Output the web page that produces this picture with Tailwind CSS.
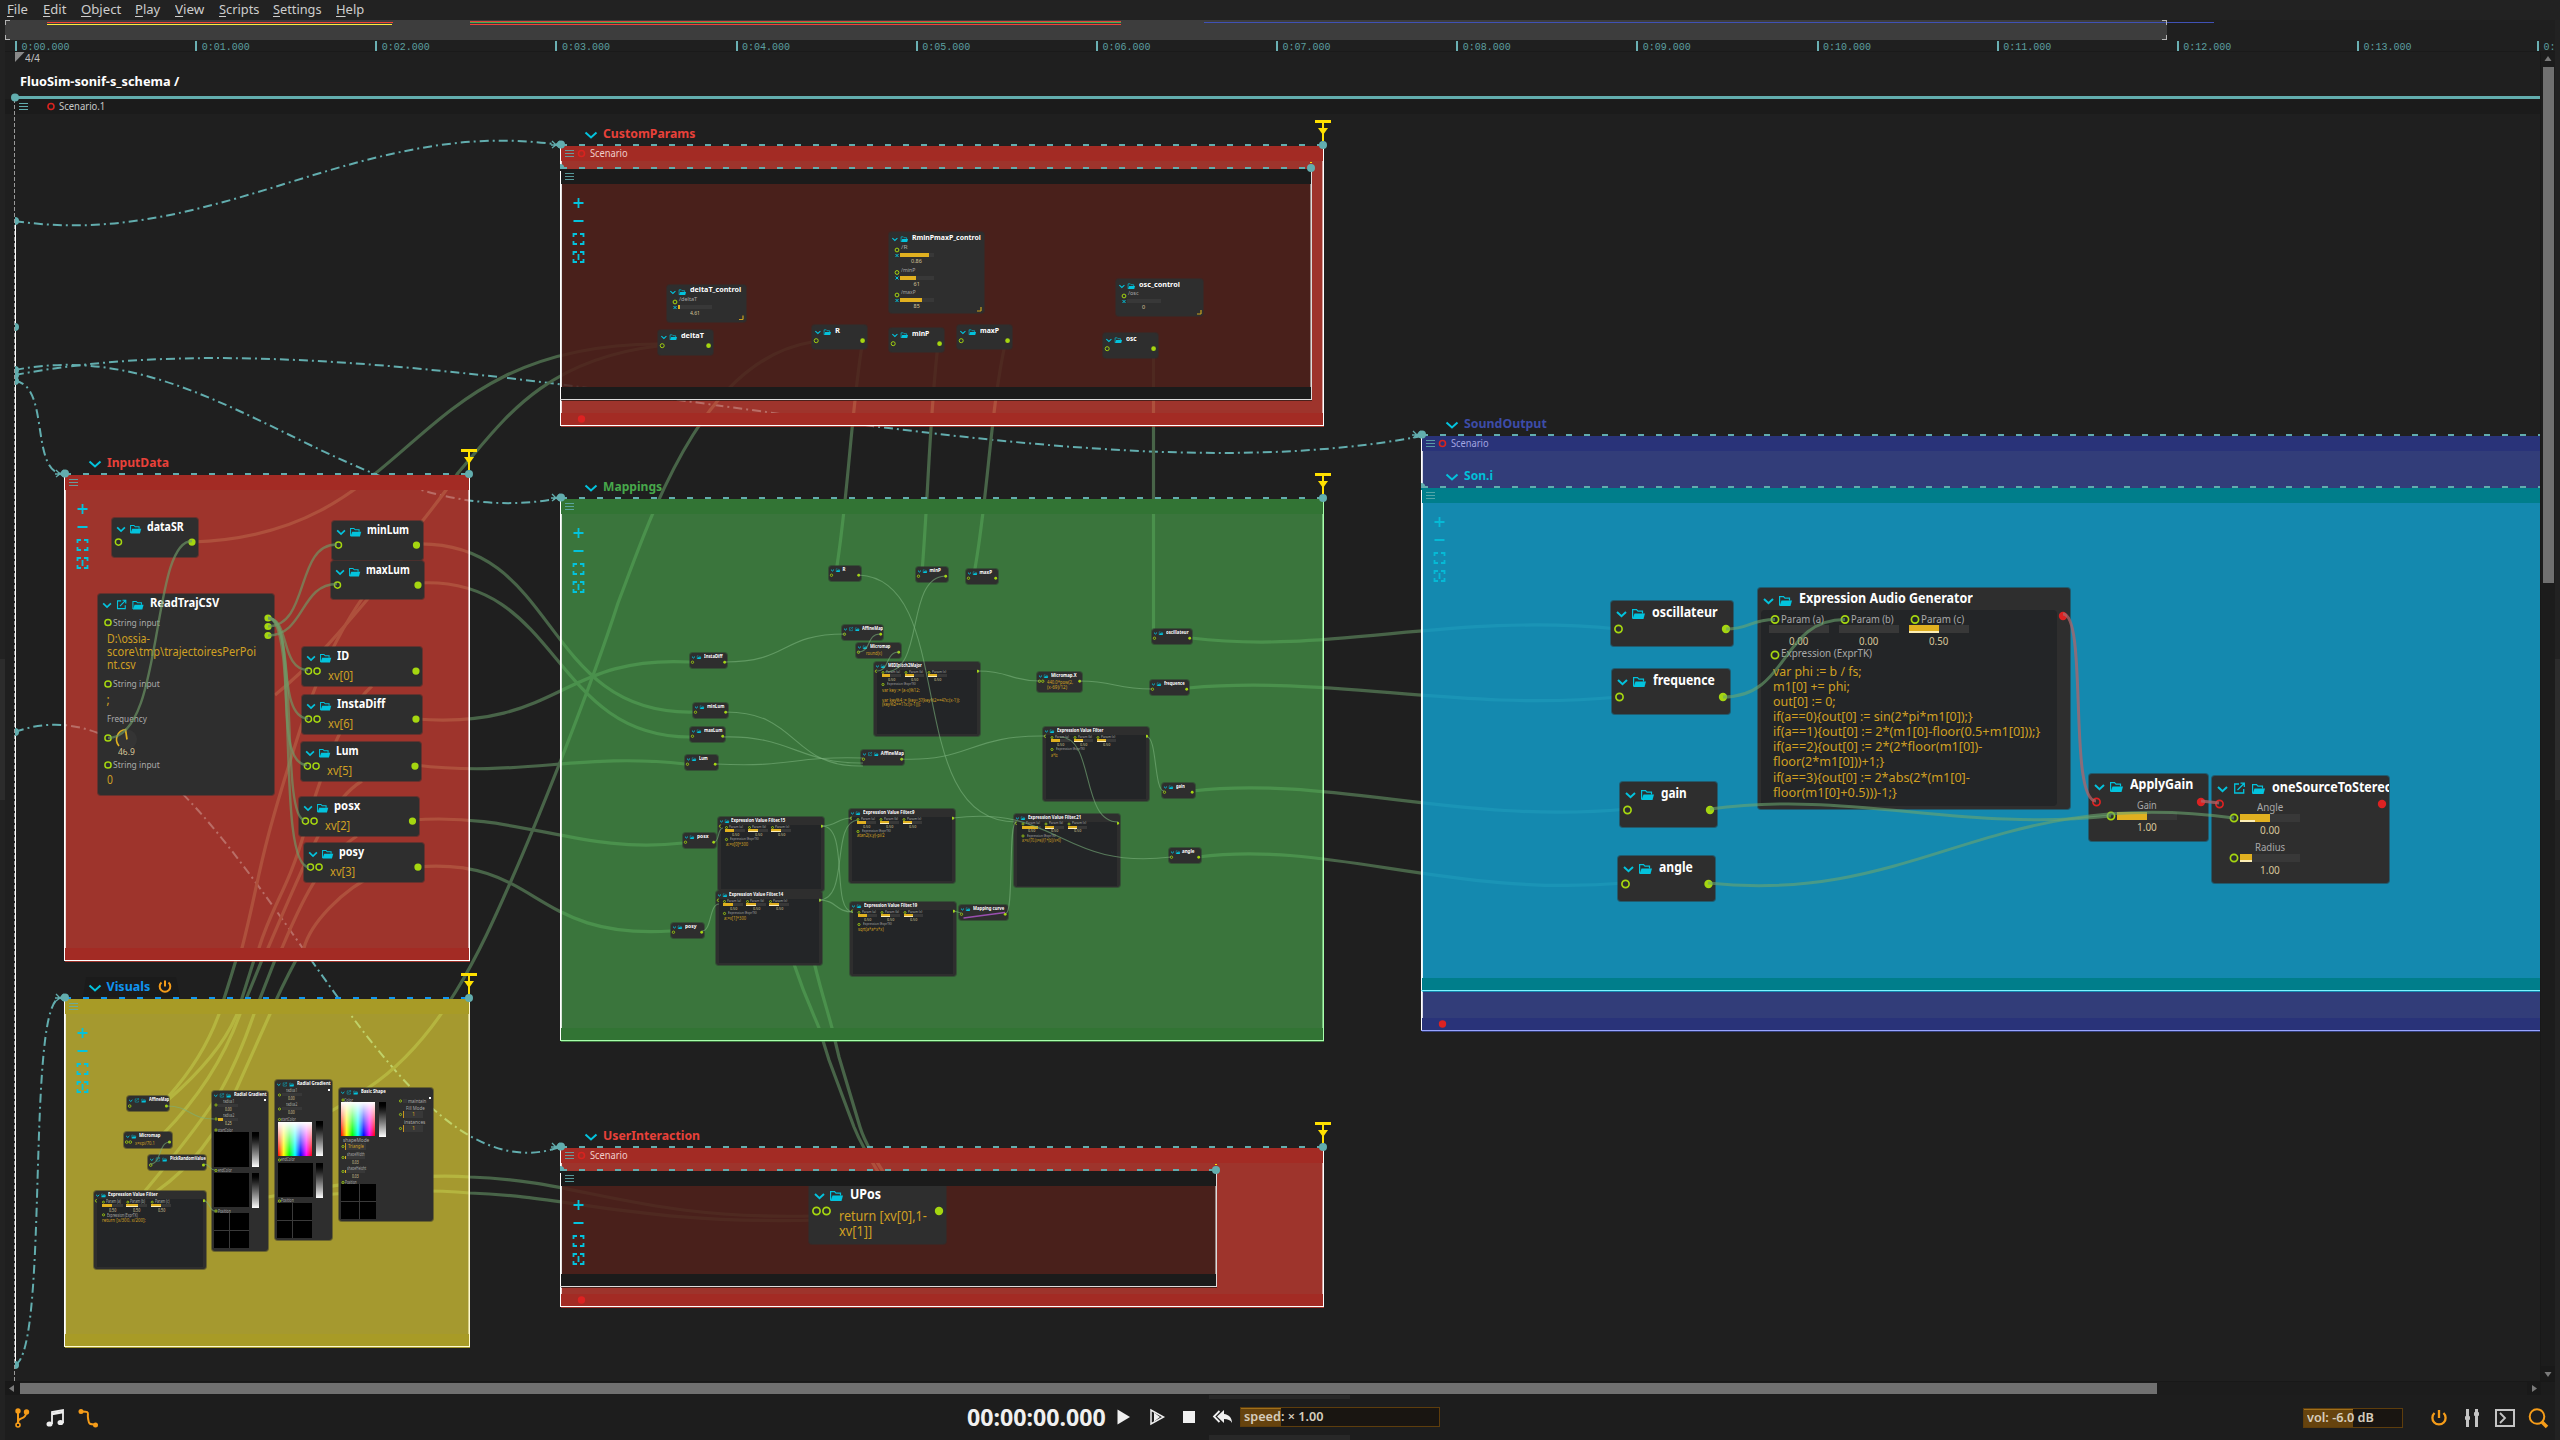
<!DOCTYPE html>
<html lang="en">
<head>
<meta charset="utf-8">
<title>FluoSim-sonif-s_schema</title>
<script src="https://cdn.jsdelivr.net/npm/@tailwindcss/browser@4"></script>
</head>
<body class="flex h-screen w-screen flex-col overflow-hidden bg-[#222222] font-['Noto_Sans',sans-serif] text-[#cfcfcf]">

<nav class="flex h-5 shrink-0 items-center pl-[7px] text-[12.5px] leading-5 text-[#cdcdcd]">
  <div class="w-9"><span data-w="21" class="inline-block origin-left"><u class="underline-offset-2">F</u>ile</span></div>
  <div class="w-[38px]"><span data-w="23" class="inline-block origin-left"><u class="underline-offset-2">E</u>dit</span></div>
  <div class="w-[54px]"><span data-w="40" class="inline-block origin-left"><u class="underline-offset-2">O</u>bject</span></div>
  <div class="w-10"><span data-w="25" class="inline-block origin-left"><u class="underline-offset-2">P</u>lay</span></div>
  <div class="w-[44px]"><span data-w="29" class="inline-block origin-left"><u class="underline-offset-2">V</u>iew</span></div>
  <div class="w-[54px]"><span data-w="40" class="inline-block origin-left"><u class="underline-offset-2">S</u>cripts</span></div>
  <div class="w-[63px]"><span data-w="49" class="inline-block origin-left"><u class="underline-offset-2">S</u>ettings</span></div>
  <div class="w-10"><span data-w="28" class="inline-block origin-left"><u class="underline-offset-2">H</u>elp</span></div>
</nav>

<div class="flex min-h-0 flex-1">
  <div class="flex w-[5px] shrink-0 flex-col pt-[639px]"><div class="h-[141px] w-[5px] bg-[#2c2c2c]"></div></div>

  <div class="flex min-w-0 flex-1 flex-col bg-[#1f1f1f]">
    <!-- minimap -->
    <svg class="h-5 w-full shrink-0" viewBox="5 20 2550 20" shape-rendering="crispEdges">
      <rect x="5" y="20" width="2162" height="20" fill="#3d3d3d"/>
      <rect x="47" y="22" width="346" height="1" fill="#f44336"/><rect x="47" y="24" width="345" height="1" fill="#ffeb3b"/>
      <rect x="470" y="21" width="651" height="1" fill="#e0453a"/><rect x="470" y="22" width="651" height="1" fill="#4caf50"/><rect x="470" y="24" width="651" height="1" fill="#f44336"/>
      <rect x="1204" y="22" width="1010" height="1" fill="#3f51b5"/>
      <path d="M10 20.5H5.5V25M5.5 35V39.5H10M2162 20.5H2166.5V25M2166.5 35V39.5H2162" fill="none" stroke="#b5b5b5"/>
    </svg>
    <!-- time ruler -->
    <div id="ruler" class="relative h-3 shrink-0 overflow-hidden border-b border-[#1a1a1a]"></div>

    <div class="flex min-h-0 flex-1">
      <main class="relative min-w-0 flex-1 overflow-hidden border-r border-[#181818]">
        <div id="stage" class="absolute -top-[52px] -left-[5px] h-[1440px] w-[2560px]"></div>
      </main>
      <div class="flex w-[14px] shrink-0 flex-col items-center bg-[#1c1c1c]">
        <svg class="h-[15px] w-[14px] shrink-0" viewBox="0 0 14 15"><path d="M3.5 9h7L7 4z" fill="#7a7a7a"/></svg>
        <div class="h-[516px] w-[11px] bg-[#707070]"></div>
        <div class="flex-1"></div>
        <svg class="h-[15px] w-[14px] shrink-0 bg-[#191919]" viewBox="0 0 14 15"><path d="M3.5 6h7L7 11z" fill="#7a7a7a"/></svg>
      </div>
    </div>
    <div class="flex h-[14px] shrink-0 items-center border-t border-[#181818] bg-[#1c1c1c]">
      <svg class="h-[13px] w-[15px] shrink-0 bg-[#191919]" viewBox="0 0 15 13"><path d="M9 3v7L4 6.500z" fill="#7a7a7a"/></svg>
      <div class="h-[11px] w-[2137px] bg-[#707070]"></div>
      <div class="flex-1"></div>
      <svg class="mr-[14px] h-[13px] w-[14px] shrink-0 bg-[#191919]" viewBox="0 0 14 13"><path d="M5 3v7l5-3.500z" fill="#7a7a7a"/></svg>
    </div>

    <!-- transport -->
    <footer class="flex h-[45px] shrink-0 items-center bg-[#1d1d1d]">
      <svg class="ml-[9px] h-[22px] w-[92px] shrink-0" viewBox="14 1406 92 22" fill="none">
        <g stroke="#f59c19" stroke-width="2"><path d="M18 1410v13M18 1421c0-5 8-2 8-9"/><circle cx="18" cy="1424" r="2" stroke-width="1.600"/></g>
        <g fill="#f59c19"><circle cx="18" cy="1410" r="2.700"/><circle cx="26.500" cy="1411" r="2.700"/></g>
        <path d="M52 1423v-12l11-2v13" stroke="#eee" stroke-width="1.800"/><path d="M52 1413l11-2" stroke="#eee" stroke-width="2.500"/>
        <ellipse cx="49.500" cy="1423" rx="3" ry="2.600" fill="#eee"/><ellipse cx="60.500" cy="1421.500" rx="3" ry="2.600" fill="#eee"/>
        <path d="M81 1410.500c10 0 6 1 7 6.500s0 6.500 8 6.500" stroke="#f59c19" stroke-width="2"/>
        <circle cx="81" cy="1410.500" r="2.500" fill="#f59c19"/><circle cx="95.500" cy="1424" r="2.500" fill="#f59c19"/>
      </svg>
      <div class="ml-[861px] w-[150px] shrink-0 text-[23px] leading-[45px] font-bold text-[#f0f0f0]"><span data-w="139" class="inline-block origin-left">00:00:00.000</span></div>
      <svg class="h-[45px] w-[123px] shrink-0" viewBox="1117 1395 123 45">
        <rect x="1209" y="1395" width="31" height="4" fill="#282828"/><rect x="1209" y="1435" width="31" height="5" fill="#282828"/>
        <path d="M1117.500 1409.500v15l12.500-7.500z" fill="#f0f0f0"/>
        <path d="M1151 1410v14l12.500-7z" fill="none" stroke="#f0f0f0" stroke-width="1.500"/><path d="M1154 1412.500v9l6-4.500z" fill="#f0f0f0"/>
        <rect x="1183" y="1411" width="12" height="12" fill="#f0f0f0"/>
        <path d="M1224 1410l-7 6.500 7 6.500v-4c4 0 6.500 1 8 4 0-5-3-8.500-8-9z" fill="#f0f0f0"/><path d="M1219.500 1411l-5.500 5.500 5.500 5.500" fill="none" stroke="#f0f0f0" stroke-width="1.800"/>
      </svg>
      <div class="flex h-[45px] w-[200px] shrink-0 flex-col justify-between">
        <div class="h-1 w-[110px] bg-[#282828]"></div>
        <div class="relative h-5 w-full overflow-hidden border border-[#5e3d0c] bg-[#191511]">
          <div class="h-full w-10 border-t border-[#a0701b] bg-[#66430e]"></div>
          <span data-w="79" class="absolute top-0 left-[3px] inline-block origin-left text-[12.5px] leading-[18px] font-semibold whitespace-pre text-[#d6cdbd]">speed: × 1.00</span>
        </div>
        <div class="h-[5px] w-[110px] bg-[#282828]"></div>
      </div>
      <div class="flex-1"></div>
      <div class="relative h-5 w-[100px] shrink-0 overflow-hidden border border-[#5e3d0c] bg-[#191511]">
        <div class="h-full w-[49px] border-t border-[#a0701b] bg-[#66430e]"></div>
        <span data-w="67" class="absolute top-0 left-[3px] inline-block origin-left text-[12.5px] leading-[18px] font-semibold whitespace-pre text-[#d6cdbd]">vol: -6.0 dB</span>
      </div>
      <svg class="mr-[5px] ml-[27px] h-[24px] w-[120px] shrink-0" viewBox="2430 1405 120 24" fill="none">
        <path d="M2434.500 1412a6.600 6.600 0 1 0 9 0M2439 1409v8" stroke="#f59c19" stroke-width="2.300"/>
        <path d="M2467.500 1408v18M2476.500 1408v18" stroke="#c4c4c4" stroke-width="3"/><path d="M2465 1417h5M2474 1413h5" stroke="#c4c4c4" stroke-width="3.500"/>
        <rect x="2496" y="1409" width="18" height="16" stroke="#c4c4c4" stroke-width="2"/><path d="M2500 1412l5 5-5 5" stroke="#c4c4c4" stroke-width="1.800"/>
        <circle cx="2537" cy="1415.500" r="7.300" stroke="#f59c19" stroke-width="2"/><path d="M2542 1421l5 5" stroke="#f59c19" stroke-width="3.500"/>
      </svg>
    </footer>
  </div>

  <div class="flex w-[5px] shrink-0 flex-col pt-[639px]"><div class="h-[141px] w-[5px] bg-[#2c2c2c]"></div></div>
</div>

<script>
const TEAL = '#62adae', CYAN = '#03c3dd';
const stage = document.getElementById('stage');
const S = s => stage.insertAdjacentHTML('beforeend', s);

/* text whose baseline sits at b and whose width is stretched to w */
const T = (x, b, w, size, str, cls) =>
  `<span ${w ? `data-w="${w}"` : ''} class="absolute origin-left leading-none whitespace-pre ${cls}" style="left:${x}px;top:${b - size * .888 + (size > 11 ? .9 : .2)}px;font-size:${size}px">${str}</span>`;
const box = (x, y, w, h, color) => `<div class="absolute" style="left:${x}px;top:${y}px;width:${w}px;height:${h}px;background:${color}"></div>`;
const svg = inner => `<svg class="absolute inset-0 h-full w-full" fill="none">${inner}</svg>`;
const wires = (list, w, color, extra = '') => `<g stroke="${color}" stroke-width="${w}" ${extra}>${list.map(d => `<path d="${d}"/>`).join('')}</g>`;

const ruler = document.getElementById('ruler');
for (let i = 0; i < 15; i++) {
  const x = 10 + i * 180.15;
  ruler.insertAdjacentHTML('beforeend',
    `<div class="absolute top-px h-[10px] w-[2px] bg-[#6ab0b3]" style="left:${Math.round(x)}px"></div>` +
    `<span class="absolute top-px font-['Liberation_Mono',monospace] text-[10px] leading-[13px] text-[#5c9fa0]" style="left:${x + 6.5}px">0:${String(i).padStart(2, '0')}.000</span>`);
}

/* score header */
S(svg(`<path d="M15 52h9.500L15 62z" fill="#8a8a8a"/>`) +
  T(25, 62, 15, 10.5, '4/4', 'text-[#c4c4c4]') +
  T(20, 86, 159, 13, 'FluoSim-sonif-s_schema /', 'font-bold text-white') +
  box(5, 99, 2536, 15, '#1b1b1b') +
  T(59, 110, 46, 10.5, 'Scenario.1', 'text-[#c9c9c9]'));

/* cables and triggers that run below the interval boxes */
S(svg(
  wires([
    'M15 221C215 251 360 115 560 145', 'M15 375C415 298 1022 513 1422 436', 'M15 370C215 330 360 538 560 498',
    'M15 381C50 385 30 470 62 474', 'M15 732C225 655 368 1215 560 1147', 'M15 1365C50 1350 25 990 62 998'
  ], 2, TEAL, 'stroke-dasharray="9 4 2 4"') +
  wires([
    'M192 542C420 535 400 345 658 344', 'M658 346C540 360 500 425 458 473C400 560 345 590 300 730S262 870 242 948L236 960Q227 990 219 1014Q203 1058 168 1097',
    'M402 560C360 605 330 650 275 695',
    'M372 686C345 710 322 770 305 830S272 905 259 948L254 960L237 1014Q220 1055 168 1100',
    'M362 781C330 800 310 850 268 948L262 960L240 1014Q216 1080 163 1134',
    'M357 836C320 860 300 905 282 948L275 960L254 1014Q238 1060 221 1090T145 1191',
    'M380 872C340 890 310 925 304 948L296 960Q280 990 270 1014L236 1090Q208 1155 157 1191',
    'M416 544C560 540 540 715 693 712', 'M418 583C560 575 550 737 690 737', 'M416 719C560 730 560 655 690 662',
    'M415 765C520 778 580 752 685 764', 'M412 820C520 812 580 855 683 843', 'M417 867C540 857 530 940 671 931',
    'M863 340C852 400 848 500 836 572', 'M938 345C930 410 928 500 922 572', 'M1006 340C990 410 988 500 974 574', 'M1153.500 345V634',
    'M812 342C700 360 650 520 618 603C590 690 540 815 511 881S441 1040 368 1088S340 1102 300 1104',
    'M780 890L794 964C806 1000 814 1015 819 1028L829 1060L854 1127C860 1142 866 1152 886 1185', 'M800 890L814.500 964C822 995 828 1012 832 1028L839 1057L860 1127C864 1140 872 1156 892 1185',
    'M268 1197Q400 1172 470 1177C580 1180 640 1220 812 1216', 'M300 1197Q400 1187 470 1193C570 1196 640 1225 820 1220',
    'M1191 638C1330 655 1450 612 1618 629', 'M1188 688C1330 675 1460 712 1619 697', 'M1192 791C1330 775 1460 825 1627 809', 'M1198 857C1330 840 1450 898 1625 883'
  ], 3.2, '#486448')));

/* interval boxes */
function frame(f) {
  const h = f.y2 - f.y, w = f.x2 - f.x;
  S(box(f.x + 1, f.y, w, h + 2, f.fill) +
    box(f.x, f.y, w, 15, f.band) + box(f.x, f.foot, w, f.y2 - f.foot, f.band) +
    box(f.x, f.y + 2, 1, h - 1, '#fff') + box(f.x + 1, f.y + 15, 1, f.foot - f.y - 15, '#fffc') +
    box(f.x2, f.y + 2, 1, h - 1, f.edge) + box(f.x2 - 1, f.y + 15, 1, f.foot - f.y - 15, f.edge + '88') +
    box(f.x, f.y2, w, 1, f.edge));
  let s = `<path d="M${f.x + 1} ${f.y - 1}H${f.x2}" stroke="${f.dash || TEAL}" stroke-width="2" stroke-dasharray="6 12"/>
    <path d="M${f.x + 5} ${f.y + 4.500}h9m-9 3h9m-9 3h9" stroke="${TEAL}" stroke-opacity=".85"/>`;
  if (!f.inner) s += `<circle cx="${f.x + 1}" cy="${f.y - 1.500}" r="4" fill="${TEAL}"/><path d="M${f.x - 8} ${f.y - 5}l4 4-4 3m8-7-4 4 4 3M${f.x - 9} ${f.y - 1}h8" stroke="${TEAL}" stroke-width="1.300"/>`;
  else s += `<path d="M${f.x} ${f.y - 5}q5 0 4 5h-4z" fill="${TEAL}"/>`;
  if (f.x2 < 2541) s += `<circle cx="${f.x2}" cy="${f.y - 1}" r="4" fill="${TEAL}"/>`;
  if (f.trig) s += `<path d="M${f.x2 - 8} ${f.y - 24.500}h16" stroke="#ffe000" stroke-width="3"/><path d="M${f.x2} ${f.y - 24}v19" stroke="#ffe000" stroke-width="2"/><path d="M${f.x2 - 5} ${f.y - 18}h10l-5 7z" fill="#ffe000"/>`;
  if (f.scen) s += `<circle cx="${f.x + 21.500}" cy="${f.y + 7.500}" r="3" stroke="#d8231f" stroke-width="1.600"/><circle cx="${f.x + 21.500}" cy="${f.foot + 6}" r="3.700" fill="#dd2222"/>`;
  if (f.tab) s = `<path d="M83 ${f.y - 2}L86 977H176L180 ${f.y - 2}z" fill="#1b1b1b"/>` + s;
  if (f.title) s += `<path d="M${f.x + 25.500} ${f.y - 13.500}l5.500 5 5.500-5" stroke="${CYAN}" stroke-width="2"/>`;
  if (f.tools) {
    const x = f.x + 18.5, y = f.y + 34;
    const br = c => `M${x - 5} ${c - 2}v-3h3.500M${x + 1.500} ${c - 5}h3.500v3M${x + 5} ${c + 2}v3h-3.500M${x - 1.500} ${c + 5}h-3.500v-3`;
    s += `<g stroke="${CYAN}" stroke-width="1.800" opacity="${f.dim || 1}"><path d="M${x - 5} ${y}h10M${x} ${y - 5}v10M${x - 5} ${y + 18}h10"/><path d="${br(y + 36)}"/><path d="${br(y + 54)}M${x} ${y + 51}v6"/></g>`;
  }
  S(svg(s));
  if (f.title) S(T(f.x + 42.5, f.y - 8, f.tw, f.ts || 12.5, f.title, 'font-bold ' + f.tcls));
  if (f.scen) S(T(f.x + 29.5, f.y + 11, 38, 10.5, 'Scenario', f.scen));
}
const RED = { fill: '#f4433699', band: '#a32b24', edge: '#ffffff' };
const DARK = { fill: 'rgba(31,22,19,.67)', band: '#1b1b1b', edge: '#dddddd', inner: 1, tools: 1 };
frame({ ...RED, x: 560, x2: 1323, y: 146, foot: 413, y2: 425, title: 'CustomParams', tw: 92, tcls: 'text-[#e8413a]', scen: 'text-[#f0cfcb]', trig: 1 });
frame({ ...DARK, x: 560, x2: 1311, y: 169, foot: 387, y2: 399 });
frame({ fill: '#4caf5099', band: '#327434', edge: '#a8ffac', x: 560, x2: 1323, y: 499, foot: 1028, y2: 1040, title: 'Mappings', tw: 59, tcls: 'text-[#47a84b]', trig: 1, tools: 1 });
frame({ ...RED, x: 560, x2: 1323, y: 1148, foot: 1294, y2: 1306, title: 'UserInteraction', tw: 97, tcls: 'text-[#e8413a]', scen: 'text-[#f0cfcb]', trig: 1 });
frame({ ...DARK, x: 560, x2: 1216, y: 1171, foot: 1274, y2: 1286 });
frame({ ...RED, x: 64, x2: 469, y: 475, foot: 948, y2: 960, title: 'InputData', tw: 62, tcls: 'text-[#e8413a]', trig: 1, tools: 1 });
frame({ fill: '#ffeb3b99', band: '#a89b26', edge: '#fffbd0', x: 64, x2: 469, y: 999, foot: 1334, y2: 1346, title: 'Visuals', tw: 44, tcls: 'text-[#1095f0]', trig: 1, tools: 1, dash: '#1095f0', tab: 1 });
frame({ fill: '#3f51b599', band: '#293379', edge: '#98a4ff', x: 1421, x2: 2541, y: 436, foot: 1018, y2: 1030, title: 'SoundOutput', tw: 83, tcls: 'text-[#3d4ca8]', scen: 'text-[#a3a6e0]' });
frame({ fill: '#00bcd499', band: '#007e8b', edge: '#7df3ff', x: 1421, x2: 2541, y: 488, foot: 978, y2: 990, title: 'Son.i', tw: 29, tcls: 'text-[#00c0d8]', inner: 1, tools: 1, dim: .85 });
S(svg(`<path d="M161.500 982.500a5.300 5.300 0 1 0 7 0M165 980.500v6" stroke="#f59c19" stroke-width="2"/>`));

/* process nodes; k is the zoom of the graph that holds them */
function node(x, y, w, h, k, title, tw, o = {}) {
  const ring = (cx, cy, c) => `<circle cx="${cx}" cy="${cy}" r="${Math.max(1.1, 3.6 * k)}" stroke="${c}" stroke-width="${Math.max(.8, 1.7 * k)}"/>`;
  const pin = o.audio === 1 ? '#dd2222' : '#a5d610', pout = o.audio ? '#dd2222' : '#a5d610';
  let s = `<path d="M${6 * k} ${11 * k}l${4.5 * k} ${4.2 * k} ${4.5 * k} ${-4.2 * k}" stroke="${CYAN}" stroke-width="${Math.max(1, 2 * k)}"/>`;
  const fx = o.ext ? 40 : 21;
  if (o.ext) s += `<g transform="translate(${22 * k} ${6.500 * k}) scale(${k})" stroke="${CYAN}" stroke-width="1.300"><path d="M5 1.500H.7V10.500H9.700V6.500M3.500 7.500L10 1M6.500 .7H10.300V4.500"/></g>`;
  s += `<g transform="translate(${fx * k} ${8 * k}) scale(${k})"><path d="M.6 9.500V.6H4.500L6 2.200H10.500V4.500" stroke="${CYAN}" stroke-width="1.200"/><path d="M.5 10L2.500 4.500H13L11.500 10z" fill="${CYAN}"/></g>`;
  for (let i = 0; i < (o.ins ?? 1); i++) s += ring((7.5 + 10 * i) * k, 28 * k, pin);
  if (!o.noOut) s += `<circle cx="${w - 7 * k}" cy="${28 * k}" r="${Math.max(1.4, 4.2 * k)}" fill="${pout}"/>`;
  S(`<div class="absolute overflow-hidden rounded-[3px] bg-[#2e2e2e] ring-1 ring-[#2e2e2e]/50" style="left:${x}px;top:${y}px;width:${w}px;height:${h}px">${svg(s)}${T((o.ext ? 60 : 41) * k, 15 * k, tw, 13.6 * k, title, 'font-bold text-white')}${o.body || ''}</div>`);
}
const LBL = 'text-[#a9a9a9]', VAL = 'text-[#d9c79a]', COD = 'text-[#d0a023]';
const bar = (x, y, w, h, fill, light = 0) => box(x, y, w, h, '#383838') + (fill ? box(x, y, w * fill, h, '#e0b020') : '') + (light ? box(x, y + h - Math.max(1, h * .22), w * light, Math.max(1, h * .22), '#fdeeb5') : '');
const rings = (pts, r = 3.6, w = 1.7) => svg(pts.map(p => `<circle cx="${p[0]}" cy="${p[1]}" r="${r}" stroke="#a5d610" stroke-width="${w}"/>`).join(''));

/* InputData */
const I = .86;
node(112, 518, 86, 38.5, I, 'dataSR', 37);
node(332, 521, 90.5, 38.5, I, 'minLum', 42);
node(331, 561, 93, 38, I, 'maxLum', 44);
node(98, 594, 176, 201, I, 'ReadTrajCSV', 69, { ext: 1, ins: 0, noOut: 1 });
S(rings([[108, 622.5], [108, 684], [108, 738], [108, 765]], 3.1, 1.5) +
  T(113, 626, 47, 9, 'String input', LBL) + T(107, 643, 43, 12, 'D:\\ossia-', COD) + T(107, 656, 149, 12, 'score\\tmp\\trajectoiresPerPoi', COD) + T(107, 669, 29, 12, 'nt.csv', COD) +
  T(113, 687, 47, 9, 'String input', LBL) + T(106.5, 704, 0, 12, ';', COD) + T(107, 722, 40, 9, 'Frequency', LBL) + T(118, 754.5, 17, 9, '46.9', VAL) +
  T(113, 768, 47, 9, 'String input', LBL) + T(107, 784, 6, 12, '0', COD) +
  svg(`<circle cx="127" cy="739.500" r="10" fill="#343434"/><path d="M119 746A10 10 0 0 1 125.500 729.500L127 739.500" stroke="#e0b020" stroke-width="1.700"/>${[618, 626.5, 635.5].map(y => `<circle cx="268" cy="${y}" r="3.600" fill="#a5d610"/>`).join('')}`));
[[302, 647, 120, 'ID', 12, 0], [302, 695, 120, 'InstaDiff', 48, 6], [301, 742, 120, 'Lum', 23, 5], [299, 797, 119.5, 'posx', 26, 2], [304, 843, 120, 'posy', 25, 3]].forEach(([x, y, w, t, tw, n]) =>
  node(x, y, w, 39, I, t, tw, { ins: 2, body: T(26, 33, 25, 12, `xv[${n}]`, COD) }));

/* CustomParams */
const C = .56;
const corner = (x, y) => svg(`<path d="M${x} ${y}h-4M${x} ${y}v-4" stroke="#c9a21f" stroke-width="1.200"/>`);
const cross = (x, y) => svg(`<path d="M${x - 1.500} ${y - 1.500}l3 3m0-3l-3 3" stroke="${CYAN}"/>`);
node(667, 284.5, 78.5, 37, C, 'deltaT_control', 51, { ins: 0, noOut: 1 });
node(889, 232, 94.5, 81, C, 'RminPmaxP_control', 69, { ins: 0, noOut: 1 });
node(1116, 279, 87, 37, C, 'osc_control', 41, { ins: 0, noOut: 1 });
node(658, 330, 54.5, 24.5, C, 'deltaT', 23);
node(812, 325, 54.5, 24, C, 'R', 5);
node(889, 328, 54.5, 24, C, 'minP', 17);
node(957, 325, 54.5, 24, C, 'maxP', 19);
node(1103, 333, 54.5, 25, C, 'osc', 11);
S([[675, 302, '/deltaT', 18, .06, '4.61', 10], [897, 250, '/R', 6, .86, '0.86', 11], [897, 272.500, '/minP', 14, .48, '61', 6], [897, 295, '/maxP', 15, .65, '85', 6], [1124, 296, '/osc', 11, 0, '0', 3]].map(([x, y, l, lw, f, v, vw]) =>
  rings([[x, y]], 1.9, 1) + cross(x, y + 5.500) + T(x + 4, y, lw, 5.5, l, LBL) + bar(x + 3, y + 3, 34, 4, f) + T(x + 19.5 - vw / 2, y + 14, vw, 5.5, v, VAL)).join('') +
  corner(743, 319.500) + corner(981, 311) + corner(1201, 314));

/* UserInteraction: the node's top edge is tucked under the header band */
node(809, 1183, 137, 61, 1, 'UPos', 31, { ins: 2, body: T(30, 37.5, 88, 14, 'return [xv[0],1-', COD) + T(30, 52.5, 33, 14, 'xv[1]]', COD) });
S(box(808, 1182, 139, 4, '#1b1b1b'));

/* Mappings */
const M = .33;
[[829, 566, 32, 'R', 3], [916, 567, 32, 'minP', 11], [966, 569, 32, 'maxP', 12], [842, 625, 41, 'AffineMap', 21, 1], [856, 643, 45, 'Micromap', 20], [690, 653, 37, 'InstaDiff', 19],
 [693, 703, 35, 'minLum', 17], [690, 727, 35, 'maxLum', 18], [685, 755, 32.5, 'Lum', 9], [861, 750, 43, 'AffineMap', 23, 1], [1150, 680, 39, 'frequence', 21], [1152, 629, 40, 'oscillateur', 23],
 [1162, 783, 32.5, 'gain', 9], [1168.5, 848, 32, 'angle', 12], [683, 833, 33, 'posx', 11], [671, 923, 33, 'posy', 11], [959, 905, 48.5, 'Mapping curve', 31]].forEach(([x, y, w, t, tw, e]) =>
  node(x, y, w, 15, M, t, tw, { ext: e }));
node(1037, 672, 45, 20, M, 'Micromap.X', 26, { ins: 2 });
S(T(866, 655.5, 16, 5, 'round(x)', COD) + T(1047, 684.5, 26, 5, '440.0*pow(2,', COD) + T(1047, 689.5, 20, 5, '(x-69)/12)', COD) +
  svg('<path d="M963.500 918L1005 912.500" stroke="#9b4fb0" stroke-width="1.300"/>'));

function exprFilter(x, y, s, title, tw, lines, fills) {
  node(x, y, 106 * s, 73.5 * s, M * s, title, tw, {});
  S(box(x + 3 * s, y + 8 * s, 100 * s, 64 * s, '#232527') +
    ['Param (a)', 'Param (b)', 'Param (c)'].map((p, i) => {
      const px = x + (7.5 + 23 * i) * s;
      return rings([[px + 1.500, y + 10.500 * s]], 1, .8) + T(px + 4, y + 11.5 * s, 14 * s, 4.2 * s, p, LBL) + bar(px, y + 12 * s, 19.5 * s, 3 * s, fills[i], i ? fills[i] : 0) + T(px + 6.5 * s, y + 19.5 * s, 7 * s, 4.2 * s, '0.50', VAL);
    }).join('') +
    rings([[x + 9 * s, y + 22.500 * s]], 1.1, .8) + T(x + 12.5 * s, y + 24 * s, 29 * s, 4.2 * s, 'Expression (ExprTK)', LBL) +
    lines.map(l => T(x + 8 * s, y + l[0] * s, l[1], 5 * s, l[2], COD)).join(''));
}
exprFilter(874, 662, 1, 'MIDIpitch2Major', 34, [[30, 38, 'var key := (a-x)%12;'], [40, 78, 'var key%4 := (key&lt;3?(key%2==4?x:(x-1)):'], [44, 39, '(key%2==1?x:(x-1)));']], [.45, .5, .5]);
exprFilter(1043, 727, 1, 'Expression Value Filter', 46, [[30, 7, 'a*b;']], [.5, .5, .5]);
exprFilter(1014, 813.5, 1, 'Expression Value Filter.21', 53, [[29, 39, 'a:=x/(70.(x=a)/(1+(b))/x=0)']], [.85, .5, .5]);
exprFilter(849, 809, 1, 'Expression Value Filter.9', 52, [[28.5, 28, 'atan2(x,y)-pi/2']], [.5, .5, .5]);
exprFilter(717.5, 817, 1, 'Expression Value Filter.15', 54, [[29, 22, 'a:=x[0]*300']], [.45, .5, .5]);
exprFilter(715.5, 891, 1, 'Expression Value Filter.14', 54, [[29.5, 22, 'a:=x[1]*300']], [.5, .5, .5]);
exprFilter(850, 902, 1, 'Expression Value Filter.19', 53, [[29, 26, 'sqrt(a*a+x*x)']], [.5, .5, .5]);

/* Visuals */
const V = .36;
node(127, 1096, 42, 15, V, 'AffineMap', 20, { ext: 1 });
node(124, 1132, 48, 15.5, V, 'Micromap', 21, { ins: 2 });
node(148, 1154.5, 58, 15, V, 'PickRandomValue', 36, { ext: 1 });
S(T(135, 1145.5, 20, 5.5, 'x=xpi/70.1', COD));
exprFilter(94, 1191, 1.06, 'Expression Value Filter', 50, [[30, 44, 'return [x/300, x/200];']], [.5, .55, .5]);
node(212, 1090.5, 56, 160, V, 'Radial Gradient', 33, { ext: 1, ins: 0, noOut: 1 });
node(275, 1080, 57, 160, V, 'Radial Gradient', 34, { ext: 1, ins: 0, noOut: 1 });
node(339, 1088, 94, 133, V, 'Basic Shape', 25, { ext: 1, ins: 0, noOut: 1 });
const ramp = (x, y) => `<div class="absolute w-[7px] bg-linear-to-b from-black to-white" style="left:${x}px;top:${y}px;height:35px"></div>`;
const hue = (x, y) => `<div class="absolute h-[34px] w-[34px] bg-[linear-gradient(to_bottom,#fff,transparent),linear-gradient(to_right,red,yellow,lime,cyan,blue,magenta,red)]" style="left:${x}px;top:${y}px"></div>`;
const blk = (x, y, h = 35) => box(x, y, 34.5, h, '#000');
const pad = (x, y, c) => box(x, y, 35, 35, '#000') + box(x + c, y, 1, 35, '#3a3a3a') + box(x, y + 16.5, 35, 1, '#3a3a3a');
const dot = (x, y) => box(x, y, 2, 2, '#fff');
const tiny = (x, b, w, s, c = LBL) => T(x, b, w, 4.4, s, c);
S(tiny(223, 1103, 11, 'radius1') + bar(218, 1104, 20, 3, 0) + tiny(225, 1111, 7, '0.00', VAL) + tiny(223, 1117, 11, 'radius2') + bar(218, 1118, 20, 3, .26) + tiny(225, 1125, 7, '0.25', VAL) +
  tiny(218, 1131.5, 15, 'startColor') + blk(214, 1132) + ramp(252, 1132) + tiny(218, 1171.5, 14, 'endColor') + blk(214, 1173, 34) + ramp(252, 1173) + tiny(218, 1212.5, 13, 'Position') + pad(214, 1213, 15) + dot(264, 1099) +
  tiny(286, 1092, 11, 'radius1') + bar(282, 1093, 20, 3, 0) + tiny(288, 1100, 7, '0.00', VAL) + tiny(286, 1106, 11, 'radius2') + bar(282, 1107, 20, 3, 0) + tiny(288, 1114, 7, '0.00', VAL) +
  tiny(281, 1120.5, 15, 'startColor') + hue(278, 1122) + ramp(316, 1121) + tiny(281, 1161, 14, 'endColor') + blk(278, 1163, 34) + ramp(316, 1163) + tiny(281, 1202, 13, 'Position') + pad(277, 1203, 15) + dot(328, 1089) +
  tiny(344, 1101.5, 9, 'Color') + hue(341, 1102) + ramp(379, 1102) + tiny(343, 1141.5, 26, 'shapeMode') + box(346, 1143, 20, 7, '#383838') + box(345, 1143, 1, 7, '#c9951f') + T(347.5, 1148.5, 16, 5.5, 'Triangle', COD) +
  tiny(347, 1155.5, 18, 'shapeWidth') + bar(345, 1156, 20, 3, .06) + tiny(352, 1163.500, 7, '0.03', VAL) + tiny(347, 1169.5, 19, 'shapeHeight') + bar(345, 1170, 20, 3, .06) + tiny(352, 1177.5, 7, '0.03', VAL) +
  tiny(345, 1183.5, 12, 'Position') + pad(341, 1184, 17.5) +
  box(403, 1099, 4, 4, '#383838') + tiny(408, 1102.5, 18, 'maintain') + tiny(406, 1110, 19, 'Fill Mode') + box(404, 1111, 19, 7, '#383838') + box(403, 1111, 1, 7, '#c9951f') + T(412, 1116.5, 0, 5.5, '1', COD) +
  tiny(404, 1124, 21, 'instances') + box(404, 1125, 19, 7, '#383838') + box(403, 1125, 1, 7, '#c9951f') + T(412, 1130.5, 0, 5.5, '1', COD) + dot(429, 1097) +
  rings([[216, 1105], [216, 1119], [216, 1130], [216, 1170.500], [216, 1211], [279.500, 1095], [279.500, 1109], [279.500, 1119.500], [279.500, 1160], [279.500, 1201], [343, 1100], [343, 1146.500], [343, 1157.500], [343, 1171.500], [343, 1182.500], [400.500, 1101], [400.500, 1114.500], [400.500, 1128.500]], 1.1, .8));

/* Son.i */
node(1611, 601, 122, 45, 1, 'oscillateur', 66);
node(1612, 669, 118, 45, 1, 'frequence', 62);
node(1620, 782, 97, 45, 1, 'gain', 26);
node(1617.5, 856, 97.5, 44.5, 1, 'angle', 34);
node(1758, 587.5, 312, 221.5, 1, 'Expression Audio Generator', 174, { ins: 0, audio: 2 });
S(`<div class="absolute rounded-sm bg-[#232527]" style="left:1761px;top:610px;width:296px;height:196px"></div>` +
  ['a', 'b', 'c'].map((p, i) => T(1781 + 70 * i, 623, 43, 10.5, `Param (${p})`, LBL) + bar(1769 + 70 * i, 625, 60, 8, i === 2 ? .5 : 0, i === 2 ? .5 : 0) + T(1789 + 70 * i, 645, 19.5, 10.5, i === 2 ? '0.50' : '0.00', VAL)).join('') +
  T(1781, 657.5, 91, 10.5, 'Expression (ExprTK)', LBL) + rings([[1775, 619.500], [1845, 619.500], [1915, 619.500], [1775, 655]]) +
  [['var phi := b / fs;', 89], ['m1[0] += phi;', 77], ['out[0] := 0;', 63], ['if(a==0){out[0] := sin(2*pi*m1[0]);}', 200], ['if(a==1){out[0] := 2*(m1[0]-floor(0.5+m1[0]));}', 267], ['if(a==2){out[0] := 2*(2*floor(m1[0])-', 209.5], ['floor(2*m1[0]))+1;}', 111.5], ['if(a==3){out[0] := 2*abs(2*(m1[0]-', 196.5], ['floor(m1[0]+0.5)))-1;}', 124]]
    .map((l, i) => T(1773, 676 + 15.06 * i, l[1], 13.3, l[0], COD)).join(''));
node(2089, 773.5, 119, 67, 1, 'ApplyGain', 63, { audio: 1 });
node(2212, 776, 177, 106.5, 1, 'oneSourceToStereo', 121, { audio: 1, ext: 1 });
S(T(2137, 809, 20, 10.5, 'Gain', LBL) + bar(2117, 812, 60, 8, .5) + T(2137, 831, 20, 10.5, '1.00', VAL) +
  T(2257, 811, 26, 10.5, 'Angle', LBL) + bar(2240, 814, 60, 8, .5, .25) + T(2260, 834, 20, 10.5, '0.00', VAL) +
  T(2255, 851, 30, 10.5, 'Radius', LBL) + bar(2240, 854, 60, 8, .2, .2) + T(2260, 874, 20, 10.5, '1.00', VAL) + rings([[2111, 816], [2234, 818], [2234, 858]]));

/* cables inside the graphs and the main time axis */
S(svg(
  wires(['M192 541C150 541 165 738 108 738', 'M268 618C290 618 280 670 308 670', 'M268 618C295 618 275 718 308 718.500', 'M268 618C300 618 270 765 307 765', 'M268 618C300 618 280 815 304 820', 'M268 618C300 618 275 867 309 867',
    'M268 626.500C310 626 295 544 337 544.500', 'M268 635.500C305 635 300 584 337 584'], 2.4, '#6e9a67', 'stroke-opacity=".65"') +
  wires(['M1726 629C1750 629 1750 619.500 1775 619.500', 'M1723 697C1790 697 1780 619.500 1845 619.500', 'M1710 809C1850 790 1960 832 2111 816', 'M1708 883C1920 905 1990 785 2234 818'], 3, '#6aa56e', 'stroke-opacity=".6"') +
  wires(['M2063 614C2088 614 2068 801 2096 801', 'M2201 801L2219 803'], 3, '#b06468', 'stroke-opacity=".75"') +
  wires(['M859 575C960 580 900 822 1016 822', 'M945 576C905 578 925 672 885 672', 'M880 634C866 634 872 652 858 652', 'M899 652C885 652 890 671 877 671',
    'M725 662C790 662 780 634 845 634', 'M726 712C800 712 790 768 863 766', 'M723 737C790 735 800 764 863 763', 'M716 764C790 768 790 756 863 758', 'M978 671C1010 671 1010 681 1040 681', 'M1080 681C1115 681 1115 689 1152 689',
    'M901 759C970 762 970 735 1045 736', 'M1147 737C1157 737 1154 791 1164 791', 'M1060 737C1095 737 1080 822 1118 822', 'M714 842C720 842 717 828 723 828', 'M822 826C837 826 837 818 852 818', 'M822 826C850 826 830 912 853 912',
    'M819 900C837 900 835 912 853 912', 'M819 900C850 900 830 822 858 820', 'M953 818C1060 805 1060 870 1171 857', 'M1006 913C1014 913 1008 822 1016 822', 'M954 911L961 913', 'M702 931C712 931 709 904 719 904',
    'M167 1106C190 1106 190 1119 214 1119', 'M170 1142C158 1142 162 1164 150 1164', 'M204 1164C210 1164 209 1170 215 1170', 'M204 1201C210 1201 209 1211 215 1211'], 1.1, '#79b07b', 'stroke-opacity=".6"') +
  `<path d="M14.500 99V1381" stroke="#9a9a9a" stroke-dasharray="4 2"/><path d="M15.500 221V1363" stroke="#fff"/>
   <path d="M15 97.500H2541" stroke="${TEAL}" stroke-width="3"/><circle cx="15" cy="97.500" r="4" fill="${TEAL}"/>
   <path d="M19 103.500h9m-9 3h9m-9 3h9" stroke="${TEAL}"/><circle cx="51" cy="106.500" r="3" stroke="#d8231f" stroke-width="1.600"/>
   ${[221, 327, 370, 375, 381, 732, 1365].map(y => `<path d="M15 ${y - 4}a4 4 0 0 1 0 8z" fill="${TEAL}"/>`).join('')}
   <path d="M1311 162v1M1216 1164v1" stroke="#ffe000" stroke-width="2"/>`));

/* keep each label at its fixed width, also when fonts or styles arrive late */
const fit = e => { const n = e.offsetWidth; if (n) e.style.transform = `scaleX(${e.dataset.w / n})`; };
const watcher = new ResizeObserver(list => list.forEach(r => fit(r.target)));
document.querySelectorAll('[data-w]').forEach(e => { fit(e); watcher.observe(e); });
addEventListener('load', () => document.querySelectorAll('[data-w]').forEach(fit));
</script>
</body>
</html>
